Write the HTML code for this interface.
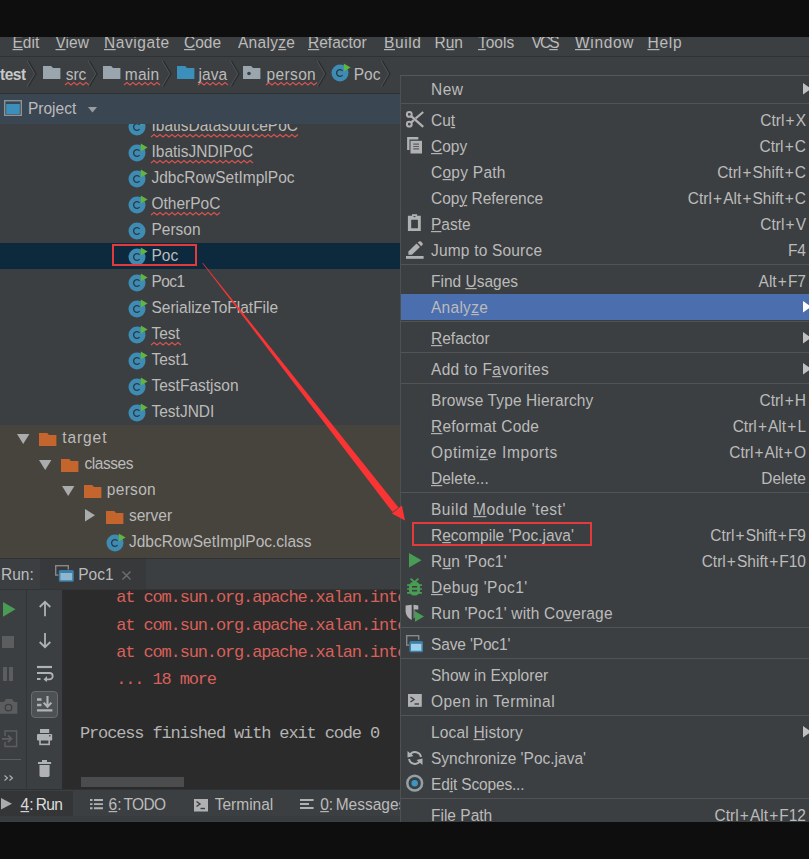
<!DOCTYPE html>
<html><head><meta charset="utf-8">
<style>
*{margin:0;padding:0;box-sizing:border-box}
html,body{width:809px;height:859px;overflow:hidden;background:#0e0e0e}
body{position:relative;font-family:"Liberation Sans",sans-serif;font-size:15.5px;color:#bbbbbb}
.a{position:absolute}
.t{position:absolute;white-space:pre;line-height:26px;height:26px;transform:scaleY(1.12);transform-origin:0 18.5px}
.t.mono{transform:none}
.u{text-decoration:underline;text-underline-offset:0.6px;text-decoration-thickness:1px}
.mono{font-family:"Liberation Mono",monospace;font-size:17px;letter-spacing:-1.14px}
.sep{position:absolute;left:401px;width:408px;height:1px;background:#515355}
.sc{position:absolute;right:3px;white-space:pre;line-height:26px;text-align:right;transform:scaleY(1.12);transform-origin:0 18.5px}
.pl{margin:0 1.1px}
svg{overflow:visible}
</style></head><body>

<div class="a" style="left:0;top:36.5px;width:809px;height:20px;background:#3c3f41;overflow:hidden">
<div class="a" style="left:0;top:19px;width:809px;height:1px;background:#2f3133"></div>
<div class="t" style="left:12.5px;top:-6.8px;letter-spacing:0px"><span class="u">E</span>dit</div>
<div class="t" style="left:55.5px;top:-6.8px;letter-spacing:0px"><span class="u">V</span>iew</div>
<div class="t" style="left:104px;top:-6.8px;letter-spacing:0.58px"><span class="u">N</span>avigate</div>
<div class="t" style="left:184px;top:-6.8px;letter-spacing:0px"><span class="u">C</span>ode</div>
<div class="t" style="left:238px;top:-6.8px;letter-spacing:0.28px">Analy<span class="u">z</span>e</div>
<div class="t" style="left:308px;top:-6.8px;letter-spacing:0px"><span class="u">R</span>efactor</div>
<div class="t" style="left:384px;top:-6.8px;letter-spacing:0.6px"><span class="u">B</span>uild</div>
<div class="t" style="left:434.5px;top:-6.8px;letter-spacing:0px">R<span class="u">u</span>n</div>
<div class="t" style="left:478px;top:-6.8px;letter-spacing:0px"><span class="u">T</span>ools</div>
<div class="t" style="left:531.5px;top:-6.8px;letter-spacing:-1.9px">VC<span class="u">S</span></div>
<div class="t" style="left:575px;top:-6.8px;letter-spacing:0.68px"><span class="u">W</span>indow</div>
<div class="t" style="left:647.5px;top:-6.8px;letter-spacing:0.73px"><span class="u">H</span>elp</div>
</div>
<div class="a" style="left:0;top:56.5px;width:809px;height:37px;background:#3c3f41"></div>
<div class="t" style="left:0px;top:61.5px;font-weight:bold;color:#c8c8c8;letter-spacing:-0.5px">test</div>
<svg class="a" style="left:27.4px;top:61px" width="10" height="25.5" viewBox="0 0 10 25.5"><polyline points="0.3,0 7.8,12.75 0.3,25.5" fill="none" stroke="#505355" stroke-width="1.1"/><polyline points="1.5,0 9,12.75 1.5,25.5" fill="none" stroke="#2a2c2e" stroke-width="1.3"/></svg>
<svg class="a" style="left:43px;top:66px" width="17.4" height="13" viewBox="0 0 17.4 13"><path d="M0 0 H8.2 L10 2 H17.4 V13 H0 Z" fill="#9aa5ae"/></svg>
<div class="t" style="left:65.7px;top:61.5px;">src</div>
<svg class="a" style="left:65px;top:81.5px" width="21" height="4"><polyline points="0,3 3,0.5 6,3 9,0.5 12,3 15,0.5 18,3 21,0.5 24,3" fill="none" stroke="#d9534f" stroke-width="1.1"/></svg>
<svg class="a" style="left:88px;top:61px" width="10" height="25.5" viewBox="0 0 10 25.5"><polyline points="0.3,0 7.8,12.75 0.3,25.5" fill="none" stroke="#505355" stroke-width="1.1"/><polyline points="1.5,0 9,12.75 1.5,25.5" fill="none" stroke="#2a2c2e" stroke-width="1.3"/></svg>
<svg class="a" style="left:102.6px;top:66px" width="17.4" height="13" viewBox="0 0 17.4 13"><path d="M0 0 H8.2 L10 2 H17.4 V13 H0 Z" fill="#9aa5ae"/></svg>
<div class="t" style="left:124.8px;top:61.5px;letter-spacing:0.27px">main</div>
<svg class="a" style="left:124px;top:81.5px" width="35" height="4"><polyline points="0,3 3,0.5 6,3 9,0.5 12,3 15,0.5 18,3 21,0.5 24,3 27,0.5 30,3 33,0.5 36,3" fill="none" stroke="#d9534f" stroke-width="1.1"/></svg>
<svg class="a" style="left:162px;top:61px" width="10" height="25.5" viewBox="0 0 10 25.5"><polyline points="0.3,0 7.8,12.75 0.3,25.5" fill="none" stroke="#505355" stroke-width="1.1"/><polyline points="1.5,0 9,12.75 1.5,25.5" fill="none" stroke="#2a2c2e" stroke-width="1.3"/></svg>
<svg class="a" style="left:177px;top:66px" width="17.4" height="13" viewBox="0 0 17.4 13"><path d="M0 0 H8.2 L10 2 H17.4 V13 H0 Z" fill="#3d8fbb"/></svg>
<div class="t" style="left:198.6px;top:61.5px;">java</div>
<svg class="a" style="left:198px;top:81.5px" width="29" height="4"><polyline points="0,3 3,0.5 6,3 9,0.5 12,3 15,0.5 18,3 21,0.5 24,3 27,0.5 30,3" fill="none" stroke="#d9534f" stroke-width="1.1"/></svg>
<svg class="a" style="left:230px;top:61px" width="10" height="25.5" viewBox="0 0 10 25.5"><polyline points="0.3,0 7.8,12.75 0.3,25.5" fill="none" stroke="#505355" stroke-width="1.1"/><polyline points="1.5,0 9,12.75 1.5,25.5" fill="none" stroke="#2a2c2e" stroke-width="1.3"/></svg>
<svg class="a" style="left:243.4px;top:66px" width="17.4" height="13" viewBox="0 0 17.4 13"><path d="M0 0 H8.2 L10 2 H17.4 V13 H0 Z" fill="#9aa5ae"/><circle cx="6" cy="7.5" r="1.8" fill="#3c3f41"/></svg>
<div class="t" style="left:266.6px;top:61.5px;letter-spacing:0.35px">person</div>
<svg class="a" style="left:266px;top:81.5px" width="48" height="4"><polyline points="0,3 3,0.5 6,3 9,0.5 12,3 15,0.5 18,3 21,0.5 24,3 27,0.5 30,3 33,0.5 36,3 39,0.5 42,3 45,0.5 48,3 51,0.5" fill="none" stroke="#d9534f" stroke-width="1.1"/></svg>
<svg class="a" style="left:317px;top:61px" width="10" height="25.5" viewBox="0 0 10 25.5"><polyline points="0.3,0 7.8,12.75 0.3,25.5" fill="none" stroke="#505355" stroke-width="1.1"/><polyline points="1.5,0 9,12.75 1.5,25.5" fill="none" stroke="#2a2c2e" stroke-width="1.3"/></svg>
<svg class="a" style="left:331px;top:63.3px" width="22" height="20" viewBox="0 0 22 20"><circle cx="9" cy="10" r="8.5" fill="#3e8bb3"/><path d="M11.6 7.8 A3.4 3.4 0 1 0 11.6 12.2" fill="none" stroke="#293a45" stroke-width="1.3"/><polygon points="12.8,0.6 19.6,4.4 12.8,8.4" fill="#60b442"/></svg>
<div class="t" style="left:353.7px;top:61.5px;">Poc</div>
<svg class="a" style="left:380.5px;top:61px" width="10" height="25.5" viewBox="0 0 10 25.5"><polyline points="0.3,0 7.8,12.75 0.3,25.5" fill="none" stroke="#505355" stroke-width="1.1"/><polyline points="1.5,0 9,12.75 1.5,25.5" fill="none" stroke="#2a2c2e" stroke-width="1.3"/></svg>
<div class="a" style="left:0;top:93.5px;width:400px;height:30.5px;background:#3b4653"></div>
<div class="a" style="left:0;top:92.6px;width:400px;height:1.6px;background:#2e3032"></div>
<svg class="a" style="left:3.5px;top:100px" width="18" height="16" viewBox="0 0 18 16"><rect x="0.7" y="0.7" width="16.6" height="14.6" fill="none" stroke="#8b9298" stroke-width="1.4"/><rect x="2.2" y="4" width="13.6" height="10" fill="#3d8fbb"/></svg>
<div class="t" style="left:28px;top:95.8px;">Project</div>
<svg class="a" style="left:88px;top:106.5px" width="9" height="6"><polygon points="0,0 9,0 4.5,5.5" fill="#9a9c9e"/></svg>
<div class="a" style="left:0;top:124px;width:400px;height:434px;background:#3c3f41;overflow:hidden">
<div class="a" style="left:0;top:118.7px;width:400px;height:26px;background:#0d293e"></div>
<div class="a" style="left:0;top:300.5px;width:400px;height:134px;background:#47443d"></div>
<svg class="a" style="left:127.6px;top:-7.4px" width="22" height="20" viewBox="0 0 22 20"><circle cx="9" cy="10" r="8.5" fill="#3e8bb3"/><path d="M11.6 7.8 A3.4 3.4 0 1 0 11.6 12.2" fill="none" stroke="#293a45" stroke-width="1.3"/><polygon points="12.8,0.6 19.6,4.4 12.8,8.4" fill="#60b442"/></svg>
<div class="t" style="left:151.5px;top:-10.7px;">IbatisDatasourcePoC</div>
<svg class="a" style="left:150.5px;top:9.600000000000001px" width="146" height="4"><polyline points="0,3 3,0.5 6,3 9,0.5 12,3 15,0.5 18,3 21,0.5 24,3 27,0.5 30,3 33,0.5 36,3 39,0.5 42,3 45,0.5 48,3 51,0.5 54,3 57,0.5 60,3 63,0.5 66,3 69,0.5 72,3 75,0.5 78,3 81,0.5 84,3 87,0.5 90,3 93,0.5 96,3 99,0.5 102,3 105,0.5 108,3 111,0.5 114,3 117,0.5 120,3 123,0.5 126,3 129,0.5 132,3 135,0.5 138,3 141,0.5 144,3 147,0.5" fill="none" stroke="#d9534f" stroke-width="1.1"/></svg>
<svg class="a" style="left:127.6px;top:18.6px" width="22" height="20" viewBox="0 0 22 20"><circle cx="9" cy="10" r="8.5" fill="#3e8bb3"/><path d="M11.6 7.8 A3.4 3.4 0 1 0 11.6 12.2" fill="none" stroke="#293a45" stroke-width="1.3"/><polygon points="12.8,0.6 19.6,4.4 12.8,8.4" fill="#60b442"/></svg>
<div class="t" style="left:151.5px;top:15.3px;">IbatisJNDIPoC</div>
<svg class="a" style="left:150.5px;top:35.6px" width="100" height="4"><polyline points="0,3 3,0.5 6,3 9,0.5 12,3 15,0.5 18,3 21,0.5 24,3 27,0.5 30,3 33,0.5 36,3 39,0.5 42,3 45,0.5 48,3 51,0.5 54,3 57,0.5 60,3 63,0.5 66,3 69,0.5 72,3 75,0.5 78,3 81,0.5 84,3 87,0.5 90,3 93,0.5 96,3 99,0.5 102,3" fill="none" stroke="#d9534f" stroke-width="1.1"/></svg>
<svg class="a" style="left:127.6px;top:44.6px" width="22" height="20" viewBox="0 0 22 20"><circle cx="9" cy="10" r="8.5" fill="#3e8bb3"/><path d="M11.6 7.8 A3.4 3.4 0 1 0 11.6 12.2" fill="none" stroke="#293a45" stroke-width="1.3"/><polygon points="12.8,0.6 19.6,4.4 12.8,8.4" fill="#60b442"/></svg>
<div class="t" style="left:151.5px;top:41.3px;">JdbcRowSetImplPoc</div>
<svg class="a" style="left:127.6px;top:70.6px" width="22" height="20" viewBox="0 0 22 20"><circle cx="9" cy="10" r="8.5" fill="#3e8bb3"/><path d="M11.6 7.8 A3.4 3.4 0 1 0 11.6 12.2" fill="none" stroke="#293a45" stroke-width="1.3"/><polygon points="12.8,0.6 19.6,4.4 12.8,8.4" fill="#60b442"/></svg>
<div class="t" style="left:151.5px;top:67.3px;">OtherPoC</div>
<svg class="a" style="left:150.5px;top:87.6px" width="68" height="4"><polyline points="0,3 3,0.5 6,3 9,0.5 12,3 15,0.5 18,3 21,0.5 24,3 27,0.5 30,3 33,0.5 36,3 39,0.5 42,3 45,0.5 48,3 51,0.5 54,3 57,0.5 60,3 63,0.5 66,3 69,0.5" fill="none" stroke="#d9534f" stroke-width="1.1"/></svg>
<svg class="a" style="left:127.6px;top:96.6px" width="22" height="20" viewBox="0 0 22 20"><circle cx="9" cy="10" r="8.5" fill="#3e8bb3"/><path d="M11.6 7.8 A3.4 3.4 0 1 0 11.6 12.2" fill="none" stroke="#293a45" stroke-width="1.3"/></svg>
<div class="t" style="left:151.5px;top:93.3px;">Person</div>
<svg class="a" style="left:127.6px;top:122.6px" width="22" height="20" viewBox="0 0 22 20"><circle cx="9" cy="10" r="8.5" fill="#3e8bb3"/><path d="M11.6 7.8 A3.4 3.4 0 1 0 11.6 12.2" fill="none" stroke="#293a45" stroke-width="1.3"/><polygon points="12.8,0.6 19.6,4.4 12.8,8.4" fill="#60b442"/></svg>
<div class="t" style="left:151.5px;top:119.3px;">Poc</div>
<svg class="a" style="left:127.6px;top:148.6px" width="22" height="20" viewBox="0 0 22 20"><circle cx="9" cy="10" r="8.5" fill="#3e8bb3"/><path d="M11.6 7.8 A3.4 3.4 0 1 0 11.6 12.2" fill="none" stroke="#293a45" stroke-width="1.3"/><polygon points="12.8,0.6 19.6,4.4 12.8,8.4" fill="#60b442"/></svg>
<div class="t" style="left:151.5px;top:145.3px;letter-spacing:-0.6px">Poc1</div>
<svg class="a" style="left:127.6px;top:174.6px" width="22" height="20" viewBox="0 0 22 20"><circle cx="9" cy="10" r="8.5" fill="#3e8bb3"/><path d="M11.6 7.8 A3.4 3.4 0 1 0 11.6 12.2" fill="none" stroke="#293a45" stroke-width="1.3"/><polygon points="12.8,0.6 19.6,4.4 12.8,8.4" fill="#60b442"/></svg>
<div class="t" style="left:151.5px;top:171.3px;">SerializeToFlatFile</div>
<svg class="a" style="left:127.6px;top:200.6px" width="22" height="20" viewBox="0 0 22 20"><circle cx="9" cy="10" r="8.5" fill="#3e8bb3"/><path d="M11.6 7.8 A3.4 3.4 0 1 0 11.6 12.2" fill="none" stroke="#293a45" stroke-width="1.3"/><polygon points="12.8,0.6 19.6,4.4 12.8,8.4" fill="#60b442"/></svg>
<div class="t" style="left:151.5px;top:197.3px;">Test</div>
<svg class="a" style="left:150.5px;top:217.6px" width="28.5" height="4"><polyline points="0,3 3,0.5 6,3 9,0.5 12,3 15,0.5 18,3 21,0.5 24,3 27,0.5 30,3" fill="none" stroke="#d9534f" stroke-width="1.1"/></svg>
<svg class="a" style="left:127.6px;top:226.6px" width="22" height="20" viewBox="0 0 22 20"><circle cx="9" cy="10" r="8.5" fill="#3e8bb3"/><path d="M11.6 7.8 A3.4 3.4 0 1 0 11.6 12.2" fill="none" stroke="#293a45" stroke-width="1.3"/><polygon points="12.8,0.6 19.6,4.4 12.8,8.4" fill="#60b442"/></svg>
<div class="t" style="left:151.5px;top:223.3px;">Test1</div>
<svg class="a" style="left:127.6px;top:252.60000000000002px" width="22" height="20" viewBox="0 0 22 20"><circle cx="9" cy="10" r="8.5" fill="#3e8bb3"/><path d="M11.6 7.8 A3.4 3.4 0 1 0 11.6 12.2" fill="none" stroke="#293a45" stroke-width="1.3"/><polygon points="12.8,0.6 19.6,4.4 12.8,8.4" fill="#60b442"/></svg>
<div class="t" style="left:151.5px;top:249.3px;">TestFastjson</div>
<svg class="a" style="left:127.6px;top:278.6px" width="22" height="20" viewBox="0 0 22 20"><circle cx="9" cy="10" r="8.5" fill="#3e8bb3"/><path d="M11.6 7.8 A3.4 3.4 0 1 0 11.6 12.2" fill="none" stroke="#293a45" stroke-width="1.3"/><polygon points="12.8,0.6 19.6,4.4 12.8,8.4" fill="#60b442"/></svg>
<div class="t" style="left:151.5px;top:275.3px;">TestJNDI</div>
</div>
<div class="a" style="left:0;top:124px;width:400px;height:433px;overflow:hidden">
<svg class="a" style="left:16.8px;top:310.3px" width="12.4" height="10"><polygon points="0,0 12.4,0 6.2,10" fill="#a9abad"/></svg>
<svg class="a" style="left:39px;top:309px" width="17.4" height="13" viewBox="0 0 17.4 13"><path d="M0 0 H8.2 L10 2 H17.4 V13 H0 Z" fill="#c5652e"/></svg>
<div class="t" style="left:62.3px;top:301.3px;letter-spacing:0.9px">target</div>
<svg class="a" style="left:39.4px;top:336.3px" width="12.4" height="10"><polygon points="0,0 12.4,0 6.2,10" fill="#a9abad"/></svg>
<svg class="a" style="left:61.3px;top:335px" width="17.4" height="13" viewBox="0 0 17.4 13"><path d="M0 0 H8.2 L10 2 H17.4 V13 H0 Z" fill="#c5652e"/></svg>
<div class="t" style="left:84.5px;top:327.3px;letter-spacing:-0.45px">classes</div>
<svg class="a" style="left:61.7px;top:362.3px" width="12.4" height="10"><polygon points="0,0 12.4,0 6.2,10" fill="#a9abad"/></svg>
<svg class="a" style="left:83.6px;top:361px" width="17.4" height="13" viewBox="0 0 17.4 13"><path d="M0 0 H8.2 L10 2 H17.4 V13 H0 Z" fill="#c5652e"/></svg>
<div class="t" style="left:106.8px;top:353.3px;letter-spacing:0.3px">person</div>
<svg class="a" style="left:85.3px;top:385.3px" width="10" height="12.4"><polygon points="0,0 10,6.2 0,12.4" fill="#a9abad"/></svg>
<svg class="a" style="left:105.8px;top:387px" width="17.4" height="13" viewBox="0 0 17.4 13"><path d="M0 0 H8.2 L10 2 H17.4 V13 H0 Z" fill="#c5652e"/></svg>
<div class="t" style="left:129px;top:379.3px;">server</div>
<svg class="a" style="left:105.7px;top:408.6px" width="22" height="20" viewBox="0 0 22 20"><circle cx="9" cy="10" r="8.5" fill="#3e8bb3"/><path d="M11.6 7.8 A3.4 3.4 0 1 0 11.6 12.2" fill="none" stroke="#293a45" stroke-width="1.3"/><polygon points="12.8,0.6 19.6,4.4 12.8,8.4" fill="#60b442"/></svg>
<div class="t" style="left:129px;top:405.3px;">JdbcRowSetImplPoc.class</div>
</div>
<div class="a" style="left:112.3px;top:244.2px;width:84.6px;height:21.6px;border:2px solid #e33b3b"></div>
<div class="a" style="left:0;top:557.5px;width:400px;height:1.8px;background:#2f3133"></div>
<div class="a" style="left:0;top:559.3px;width:400px;height:31px;background:#3c3f41"></div>
<div class="a" style="left:40px;top:559.3px;width:106px;height:30.5px;background:#37393b"></div>
<div class="t" style="left:1px;top:561.5px;">Run:</div>
<svg class="a" style="left:55px;top:565px" width="19" height="17" viewBox="0 0 19 17"><rect x="0.7" y="0.7" width="12.6" height="9.4" fill="none" stroke="#85898c" stroke-width="1.4"/><rect x="3.4" y="4.6" width="15.6" height="12.4" fill="#37393b"/><rect x="4.6" y="5.8" width="13.4" height="10.2" rx="0.8" fill="#8fb6cf" stroke="#3d7fa8" stroke-width="1.6"/><rect x="4.6" y="5.8" width="13.4" height="2.2" fill="#3d7fa8"/></svg>
<div class="t" style="left:78.2px;top:561.5px;">Poc1</div>
<svg class="a" style="left:121.6px;top:571.4px" width="9" height="9"><path d="M0.5 0.5 L8.5 8.5 M8.5 0.5 L0.5 8.5" stroke="#6e7072" stroke-width="1.3"/></svg>
<div class="a" style="left:0;top:590px;width:62px;height:199px;background:#3c3f41"></div>
<div class="a" style="left:0;top:589.3px;width:400px;height:1.2px;background:#323436"></div>
<div class="a" style="left:25.6px;top:590px;width:1.2px;height:199px;background:#323436"></div>
<div class="a" style="left:61.6px;top:590px;width:1.4px;height:199px;background:#2a2c2e"></div>
<svg class="a" style="left:2.9px;top:602.4px" width="13" height="15"><polygon points="0,0 12.5,7.35 0,14.7" fill="#499c54"/></svg>
<div class="a" style="left:2px;top:635.8px;width:12.4px;height:12.1px;background:#5b5d5f"></div>
<div class="a" style="left:2.9px;top:666.9px;width:3.8px;height:13.7px;background:#5b5d5f"></div>
<div class="a" style="left:9.4px;top:666.9px;width:3.7px;height:13.7px;background:#5b5d5f"></div>
<svg class="a" style="left:0px;top:699px" width="18" height="15" viewBox="0 0 18 15"><path d="M0 3 H4 L6 0 H12 L14 3 H17.3 V14.8 H0 Z" fill="#5b5d5f"/><circle cx="8.5" cy="8.6" r="3.3" fill="none" stroke="#3c3f41" stroke-width="1.3"/></svg>
<svg class="a" style="left:1.9px;top:729.8px" width="16" height="18" viewBox="0 0 16 18"><path d="M3 6 V1 H14.6 V16.6 H3 V12" fill="none" stroke="#5b5d5f" stroke-width="1.5"/><path d="M0 8.8 H9 M6 5.5 L9.5 8.8 L6 12.1" fill="none" stroke="#5b5d5f" stroke-width="1.8"/></svg>
<div class="a" style="left:0;top:758.5px;width:20.5px;height:1px;background:#5b5d5f"></div>
<svg class="a" style="left:3.8px;top:774.6px" width="10" height="6"><path d="M0.5 0.5 L3.5 3 L0.5 5.5 M5.5 0.5 L8.5 3 L5.5 5.5" fill="none" stroke="#afb1b3" stroke-width="1.1"/></svg>
<svg class="a" style="left:38.8px;top:600.8px" width="12" height="15.2" viewBox="0 0 12 15.2"><path d="M6 1 V15.2 M0.7 6 L6 0.8 L11.3 6" fill="none" stroke="#afb1b3" stroke-width="1.8"/></svg>
<svg class="a" style="left:38.8px;top:633.1px" width="12" height="15" viewBox="0 0 12 15"><path d="M6 0 V14 M0.7 9 L6 14.2 L11.3 9" fill="none" stroke="#afb1b3" stroke-width="1.8"/></svg>
<svg class="a" style="left:36.8px;top:665px" width="17" height="17" viewBox="0 0 17 17"><path d="M0 2 H15" stroke="#afb1b3" stroke-width="2.2"/><path d="M0 8 H12.5 A3.2 3.2 0 0 1 12.5 14.4 H8" fill="none" stroke="#afb1b3" stroke-width="1.8"/><path d="M0 14 H3.5" stroke="#afb1b3" stroke-width="2"/><polygon points="10,11 6.5,14.4 10,17" fill="#afb1b3"/></svg>
<div class="a" style="left:30.7px;top:691.1px;width:27px;height:27.2px;background:#4e5153;border:1.4px solid #696c6e;border-radius:4px"></div>
<svg class="a" style="left:37.1px;top:695.9px" width="16" height="16" viewBox="0 0 16 16"><path d="M0 3.5 H4.5 M0 9 H4.5 M0 14.3 H15.4" stroke="#afb1b3" stroke-width="2.3"/><path d="M10.5 0 V11 M6.6 6.6 L10.5 10.8 L14.4 6.6" fill="none" stroke="#afb1b3" stroke-width="2.1"/></svg>
<svg class="a" style="left:37.1px;top:729.1px" width="15.2" height="15.4" viewBox="0 0 15.2 15.4"><rect x="3" y="0" width="9.2" height="4" fill="#afb1b3"/><rect x="0" y="5" width="15.2" height="6.4" rx="1" fill="#afb1b3"/><rect x="3" y="9.5" width="9.2" height="5.9" fill="none" stroke="#afb1b3" stroke-width="1.6"/><rect x="12" y="6.2" width="1.6" height="1.2" fill="#3c3f41"/></svg>
<svg class="a" style="left:38.1px;top:759.9px" width="13.1" height="17" viewBox="0 0 13.1 17"><rect x="4" y="0" width="5" height="2" fill="#afb1b3"/><rect x="0" y="2" width="13.1" height="2" fill="#afb1b3"/><path d="M1.5 5 H11.6 V15.5 Q11.6 17 10 17 H3 Q1.5 17 1.5 15.5 Z" fill="#afb1b3"/></svg>
<div class="a" style="left:63px;top:590px;width:337px;height:199px;background:#2b2b2b;overflow:hidden">
<div class="t mono" style="left:17px;top:-5.6px;color:#d9605a;line-height:27px">    at com.sun.org.apache.xalan.internal</div>
<div class="t mono" style="left:17px;top:21.5px;color:#d9605a;line-height:27px">    at com.sun.org.apache.xalan.internal</div>
<div class="t mono" style="left:17px;top:48.6px;color:#d9605a;line-height:27px">    at com.sun.org.apache.xalan.internal</div>
<div class="t mono" style="left:17px;top:75.70000000000002px;color:#d9605a;line-height:27px">    ... 18 more</div>
<div class="t mono" style="left:17px;top:130px;color:#b4b4b4;line-height:27px">Process finished with exit code 0</div>
<div class="a" style="left:18px;top:187px;width:103px;height:10px;background:#4a4c4e"></div>
</div>
<div class="a" style="left:0;top:788.6px;width:400px;height:33px;background:#3c3f41"></div>
<div class="a" style="left:0;top:788.6px;width:400px;height:1px;background:#2f3133"></div>
<div class="a" style="left:0;top:815.8px;width:400px;height:5px;background:#393c3e"></div>
<div class="a" style="left:0;top:790.6px;width:73.4px;height:25.2px;background:#333537"></div>
<svg class="a" style="left:1.1px;top:798.4px" width="11" height="12"><polygon points="0,0 11,5.8 0,11.6" fill="#a9abad"/></svg>
<div class="t" style="left:20.5px;top:792.1px;color:#dcdcdc"><span class="u">4</span><span style="letter-spacing:-1px">: </span><span style="letter-spacing:-0.6px">Run</span></div>
<svg class="a" style="left:90.1px;top:798.8px" width="13" height="10.2" viewBox="0 0 13 10.2"><path d="M0 1 H2.5 M0 5.1 H2.5 M0 9.2 H2.5 M4 1 H13 M4 5.1 H13 M4 9.2 H13" stroke="#afb1b3" stroke-width="1.9"/></svg>
<div class="t" style="left:108.6px;top:792.1px;"><span class="u">6</span><span style="letter-spacing:-1.2px">: </span><span style="letter-spacing:-0.6px">TODO</span></div>
<svg class="a" style="left:193.6px;top:798.6px" width="14" height="12.5" viewBox="0 0 14 12.5"><rect width="14" height="12.5" fill="#afb1b3"/><path d="M2.5 2.5 L6 5 L2.5 7.5" fill="none" stroke="#3c3f41" stroke-width="1.4"/><path d="M6.5 9.5 H11" stroke="#3c3f41" stroke-width="1.4"/></svg>
<div class="t" style="left:214.7px;top:792.1px;">Terminal</div>
<svg class="a" style="left:300px;top:799px" width="14" height="10" viewBox="0 0 14 10"><path d="M0 1 H13.6 M0 5 H9 M0 9 H13.6" stroke="#afb1b3" stroke-width="1.9"/></svg>
<div class="t" style="left:320.2px;top:792.1px;"><span class="u">0</span><span style="letter-spacing:-0.9px">: </span>Messages</div>
<div class="a" style="left:399.5px;top:75px;width:410px;height:747px;background:#3c3f41;border-left:1.8px solid #4e5052;border-top:1.2px solid #555759"></div>
<div class="sep" style="top:103px"></div>
<div class="sep" style="top:264px"></div>
<div class="sep" style="top:321px"></div>
<div class="sep" style="top:352px"></div>
<div class="sep" style="top:383px"></div>
<div class="sep" style="top:492px"></div>
<div class="sep" style="top:627px"></div>
<div class="sep" style="top:658px"></div>
<div class="sep" style="top:715px"></div>
<div class="sep" style="top:798px"></div>
<div class="a" style="left:401px;top:294px;width:408px;height:26px;background:#4b6eaf"></div>
<div class="t" style="left:431px;top:77.1px;letter-spacing:0.5px">New</div>
<svg class="a" style="left:803px;top:82.6px" width="8" height="12"><polygon points="0,0 8,5.7 0,11.4" fill="#c0c0c0"/></svg>
<div class="t" style="left:431px;top:108.1px;letter-spacing:0px">Cu<span class="u">t</span></div>
<div class="sc" style="top:108.1px">Ctrl<span class="pl">+</span>X</div>
<div class="t" style="left:431px;top:134.1px;letter-spacing:0px"><span class="u">C</span>opy</div>
<div class="sc" style="top:134.1px">Ctrl<span class="pl">+</span>C</div>
<div class="t" style="left:431px;top:160.1px;letter-spacing:0.26px">C<span class="u">o</span>py Path</div>
<div class="sc" style="top:160.1px">Ctrl<span class="pl">+</span>Shift<span class="pl">+</span>C</div>
<div class="t" style="left:431px;top:186.1px;letter-spacing:0px">Cop<span class="u">y</span> Reference</div>
<div class="sc" style="top:186.1px">Ctrl<span class="pl">+</span>Alt<span class="pl">+</span>Shift<span class="pl">+</span>C</div>
<div class="t" style="left:431px;top:212.1px;letter-spacing:0px"><span class="u">P</span>aste</div>
<div class="sc" style="top:212.1px">Ctrl<span class="pl">+</span>V</div>
<div class="t" style="left:431px;top:238.1px;letter-spacing:0.19px">Jump to Source</div>
<div class="sc" style="top:238.1px">F4</div>
<div class="t" style="left:431px;top:269.1px;letter-spacing:0px">Find <span class="u">U</span>sages</div>
<div class="sc" style="top:269.1px">Alt<span class="pl">+</span>F7</div>
<div class="t" style="left:431px;top:295.1px;letter-spacing:0.27px">Analy<span class="u">z</span>e</div>
<svg class="a" style="left:803px;top:300.6px" width="8" height="12"><polygon points="0,0 8,5.7 0,11.4" fill="#ffffff"/></svg>
<div class="t" style="left:431px;top:326.1px;letter-spacing:0px"><span class="u">R</span>efactor</div>
<svg class="a" style="left:803px;top:331.6px" width="8" height="12"><polygon points="0,0 8,5.7 0,11.4" fill="#c0c0c0"/></svg>
<div class="t" style="left:431px;top:357.1px;letter-spacing:0.33px">Add to F<span class="u">a</span>vorites</div>
<svg class="a" style="left:803px;top:362.6px" width="8" height="12"><polygon points="0,0 8,5.7 0,11.4" fill="#c0c0c0"/></svg>
<div class="t" style="left:431px;top:388.1px;letter-spacing:0.12px">Browse Type Hierarchy</div>
<div class="sc" style="top:388.1px">Ctrl<span class="pl">+</span>H</div>
<div class="t" style="left:431px;top:414.1px;letter-spacing:0.24px"><span class="u">R</span>eformat Code</div>
<div class="sc" style="top:414.1px">Ctrl<span class="pl">+</span>Alt<span class="pl">+</span>L</div>
<div class="t" style="left:431px;top:440.1px;letter-spacing:0.61px">Optimi<span class="u">z</span>e Imports</div>
<div class="sc" style="top:440.1px">Ctrl<span class="pl">+</span>Alt<span class="pl">+</span>O</div>
<div class="t" style="left:431px;top:466.1px;letter-spacing:0px"><span class="u">D</span>elete...</div>
<div class="sc" style="top:466.1px">Delete</div>
<div class="t" style="left:431px;top:497.1px;letter-spacing:0.53px">Build <span class="u">M</span>odule 'test'</div>
<div class="t" style="left:431px;top:523.1px;letter-spacing:0px">R<span class="u">e</span>compile 'Poc.java'</div>
<div class="sc" style="top:523.1px">Ctrl<span class="pl">+</span>Shift<span class="pl">+</span>F9</div>
<div class="t" style="left:431px;top:549.1px;letter-spacing:0.18px">R<span class="u">u</span>n 'Poc1'</div>
<div class="sc" style="top:549.1px">Ctrl<span class="pl">+</span>Shift<span class="pl">+</span>F10</div>
<div class="t" style="left:431px;top:575.1px;letter-spacing:0.45px"><span class="u">D</span>ebug 'Poc1'</div>
<div class="t" style="left:431px;top:601.1px;letter-spacing:0.18px">Run 'Poc1' with Co<span class="u">v</span>erage</div>
<div class="t" style="left:431px;top:632.1px;letter-spacing:-0.15px">Save 'Poc1'</div>
<div class="t" style="left:431px;top:663.1px;letter-spacing:0px">Show in Explorer</div>
<div class="t" style="left:431px;top:689.1px;letter-spacing:0.45px">Open in Terminal</div>
<div class="t" style="left:431px;top:720.1px;letter-spacing:0.17px">Local <span class="u">H</span>istory</div>
<svg class="a" style="left:803px;top:725.6px" width="8" height="12"><polygon points="0,0 8,5.7 0,11.4" fill="#c0c0c0"/></svg>
<div class="t" style="left:431px;top:746.1px;letter-spacing:0px">Synchronize 'Poc.java'</div>
<div class="t" style="left:431px;top:772.1px;letter-spacing:-0.16px">Ed<span class="u">i</span>t Scopes...</div>
<div class="t" style="left:431px;top:803.1px;letter-spacing:0px">File <span class="u">P</span>ath</div>
<div class="sc" style="top:803.1px">Ctrl<span class="pl">+</span>Alt<span class="pl">+</span>F12</div>
<svg class="a" style="left:402px;top:106px" width="26" height="26" viewBox="0 0 26 26">
<circle cx="7.3" cy="8.4" r="2.4" fill="none" stroke="#afb1b3" stroke-width="2"/>
<circle cx="7.3" cy="18.2" r="2.4" fill="none" stroke="#afb1b3" stroke-width="2"/>
<path d="M9.2 10.2 L21.2 20.8" stroke="#afb1b3" stroke-width="2.3"/>
<path d="M9.2 16.4 L11.8 14.1 M13.6 12.5 L21.2 6" stroke="#afb1b3" stroke-width="2.3"/></svg>
<svg class="a" style="left:402px;top:130px" width="26" height="26" viewBox="0 0 26 26">
<path d="M6.3 20 V8.3 H16.3" fill="none" stroke="#afb1b3" stroke-width="2.4"/>
<rect x="8.5" y="10.8" width="11.5" height="12.7" fill="#afb1b3"/>
<path d="M11.2 14.1 H17 M11.2 16.5 H17 M11.2 18.9 H17" stroke="#5a5c5e" stroke-width="1.1"/></svg>
<svg class="a" style="left:402px;top:210px" width="26" height="26" viewBox="0 0 26 26">
<path d="M5.9 5.8 H18.8 V20.9 H5.9 Z M9.2 9.8 V18.3 H15.9 V9.8 Z" fill="#afb1b3" fill-rule="evenodd"/>
<rect x="10" y="4.2" width="5.1" height="2" fill="#afb1b3"/>
<ellipse cx="12.5" cy="6.6" rx="1.2" ry="0.6" fill="#3c3f41"/></svg>
<svg class="a" style="left:405.6px;top:241px" width="18" height="18" viewBox="0 0 18 18">
<path d="M2.4 13.7 L2.4 10.5 L10.5 2.6 L14 6.1 L5.9 13.7 Z" fill="#afb1b3"/>
<path d="M11.6 1.6 L13.2 0.4 Q14 -0.2 14.8 0.4 L16.6 2.2 Q17.2 3 16.6 3.8 L15.2 5.2 Z" fill="#afb1b3"/>
<rect x="0" y="15" width="17.6" height="2.8" fill="#afb1b3"/></svg>
<svg class="a" style="left:409px;top:553px" width="13" height="15"><polygon points="0,0 12.5,7.3 0,14.6" fill="#499c54"/></svg>
<svg class="a" style="left:402px;top:574px" width="26" height="26" viewBox="0 0 26 26">
<path d="M8.6 4.6 L12.5 8.2 L16.4 4.6" fill="none" stroke="#499c54" stroke-width="1.9"/>
<rect x="7" y="7.6" width="11" height="14" rx="5.2" fill="#499c54"/>
<path d="M5.1 11.1 H19.9 M5.1 15 H19.9 M5.1 18.9 H19.9" stroke="#499c54" stroke-width="1.6"/>
<rect x="10" y="12" width="5.1" height="1.6" fill="#3c3f41"/>
<rect x="10" y="15.9" width="5.1" height="1.6" fill="#3c3f41"/></svg>
<svg class="a" style="left:402px;top:600px" width="26" height="26" viewBox="0 0 26 26">
<path d="M3.6 5.6 L9.7 4.8 V20 Q4.6 17.6 3.6 12 Z" fill="#afb1b3"/>
<path d="M11.5 4.8 L16.3 5.4 V9.6 H11.5 Z" fill="#afb1b3"/>
<path d="M11.5 9.6 H12.8 V17.5 L11.5 18.6 Z" fill="#85888a"/>
<polygon points="13,11.2 22,16.5 13,21.8" fill="#499c54"/></svg>
<svg class="a" style="left:406px;top:635px" width="18" height="17" viewBox="0 0 18 17">
<rect x="0.7" y="0.7" width="12" height="9.4" fill="none" stroke="#85898c" stroke-width="1.4"/>
<rect x="3" y="4.8" width="15" height="12.2" fill="#3c3f41"/>
<rect x="4.2" y="6.8" width="12" height="9.7" rx="0.8" fill="#9fd0ea" stroke="#3d7fa8" stroke-width="1.6"/>
<rect x="4.2" y="6.8" width="12" height="2" fill="#3d7fa8"/></svg>
<svg class="a" style="left:408.2px;top:694.2px" width="14" height="13" viewBox="0 0 14 13">
<rect width="13.8" height="12.8" fill="#afb1b3"/>
<path d="M2.5 3 L6 5.5 L2.5 8" fill="none" stroke="#3c3f41" stroke-width="1.4"/>
<path d="M6.5 10 H11" stroke="#3c3f41" stroke-width="1.4"/></svg>
<svg class="a" style="left:406.8px;top:750.5px;transform:scaleX(-1)" width="16" height="14" viewBox="0 0 16 14">
<path d="M2 6 A6 6 0 0 1 13 4" fill="none" stroke="#afb1b3" stroke-width="2"/>
<polygon points="15.5,0 15.5,6.5 9.5,5" fill="#afb1b3"/>
<path d="M14 8 A6 6 0 0 1 3 10" fill="none" stroke="#afb1b3" stroke-width="2"/>
<polygon points="0.5,14 0.5,7.5 6.5,9" fill="#afb1b3"/></svg>
<svg class="a" style="left:405.7px;top:774px" width="17.2" height="17.6" viewBox="0 0 17.2 17.6">
<circle cx="8.7" cy="9.2" r="7.4" fill="none" stroke="#93a0a8" stroke-width="2.5"/>
<circle cx="8.7" cy="9.2" r="3.2" fill="#3a97c3"/></svg>
<div class="a" style="left:412.2px;top:522.4px;width:179.5px;height:23.6px;border:2px solid #e33b3b"></div>
<svg class="a" style="left:0;top:0" width="809" height="859">
<polygon points="202.4,263.2 203.0,262.9 398.5,507.5 392.5,512.0" fill="#fa3434"/>
<polygon points="405,520.4 391.9,513.4 401.9,505.6" fill="#fa3434"/>
</svg>
<div class="a" style="left:0;top:821.6px;width:809px;height:38px;background:#0e0e0e"></div>
</body></html>
